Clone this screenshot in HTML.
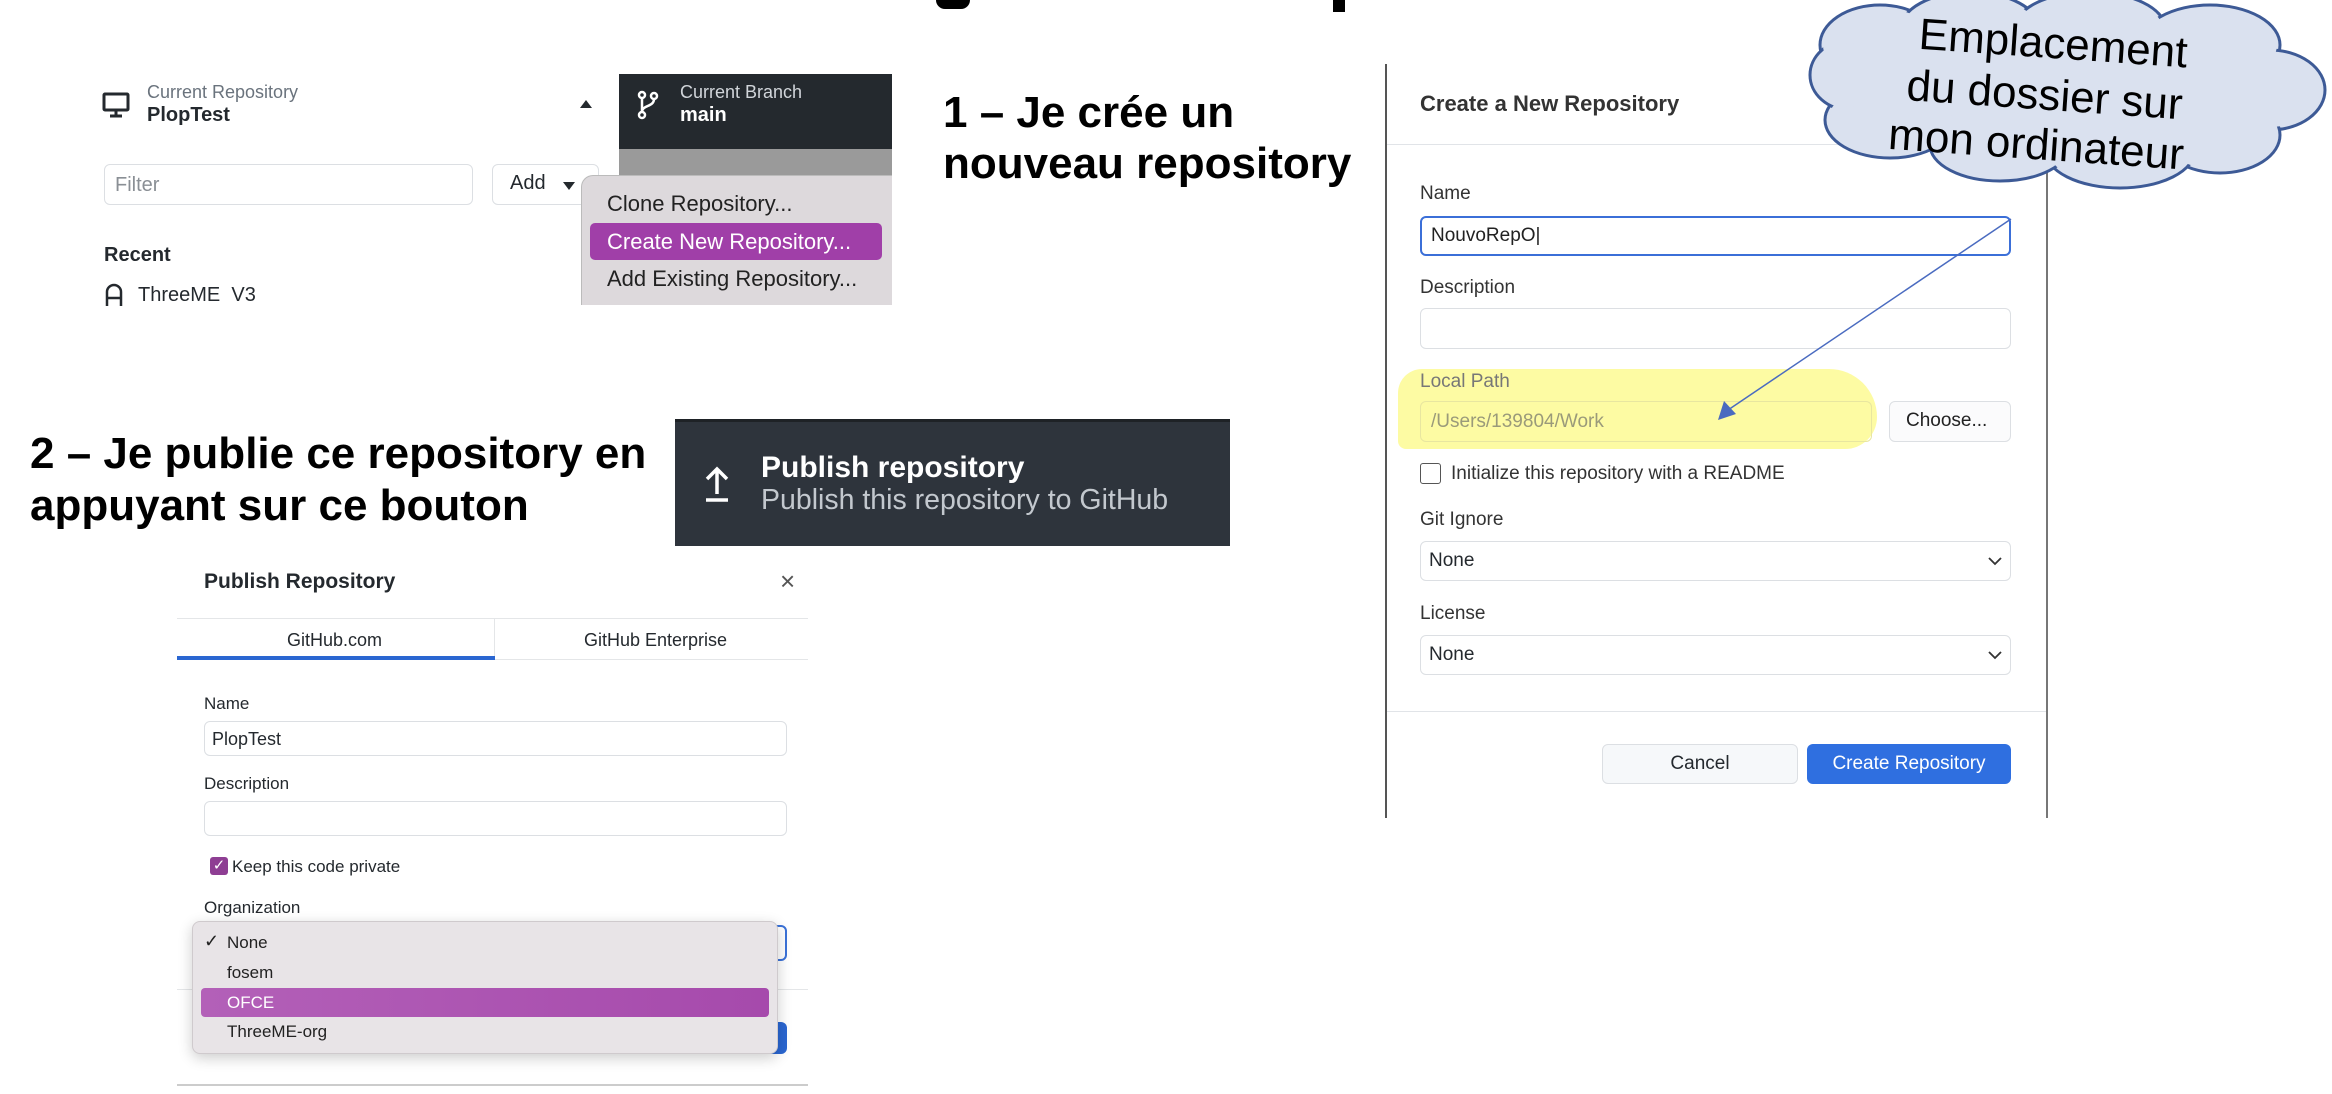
<!DOCTYPE html>
<html><head><meta charset="utf-8"><style>
*{margin:0;padding:0;box-sizing:border-box}
body{width:2332px;height:1094px;background:#fff;position:relative;overflow:hidden;font-family:"Liberation Sans",Arial,sans-serif;color:#24292e}
.a{position:absolute;white-space:nowrap}
.big{font-weight:bold;font-size:44px;color:#000;line-height:50px}
.inp{position:absolute;border:1px solid #dcdfe3;border-radius:6px;background:#fff}
.lbl{position:absolute;font-size:19px;color:#333;white-space:nowrap}
</style></head><body>

<div class="a" style="left:936px;top:0;width:34px;height:9px;background:#000;border-radius:0 0 14px 14px"></div>
<div class="a" style="left:1333px;top:0;width:12px;height:12px;background:#000"></div>
<div class="a" style="left:1937px;top:0;width:12px;height:8px;background:#000"></div>

<svg class="a" style="left:102px;top:92px" width="28" height="26" viewBox="0 0 28 26"><rect x="2" y="2" width="24" height="16" rx="1" fill="none" stroke="#24292e" stroke-width="3"/><path d="M14 18v5M8 24h12" stroke="#24292e" stroke-width="3"/></svg>
<div class="a" style="left:147px;top:82px;font-size:18px;color:#6a737d">Current Repository</div>
<div class="a" style="left:147px;top:104px;font-size:20px;font-weight:bold">PlopTest</div>
<div class="a" style="left:580px;top:100px;width:0;height:0;border-left:6px solid transparent;border-right:6px solid transparent;border-bottom:8px solid #24292e"></div>
<div class="a" style="left:619px;top:74px;width:273px;height:75px;background:#24292e"></div>
<div class="a" style="left:619px;top:149px;width:273px;height:156px;background:#9a9a9a"></div>
<svg class="a" style="left:637px;top:90px" width="22" height="30" viewBox="0 0 22 30"><g fill="none" stroke="#fff" stroke-width="2.5"><circle cx="5" cy="5" r="3"/><circle cx="17" cy="6" r="3"/><circle cx="5" cy="25" r="3"/><path d="M5 8v14M17 9c0 8-12 6-12 13"/></g></svg>
<div class="a" style="left:680px;top:82px;font-size:18px;color:#d1d5da">Current Branch</div>
<div class="a" style="left:680px;top:104px;font-size:20px;font-weight:bold;color:#fff">main</div>
<div class="inp" style="left:104px;top:164px;width:369px;height:41px"></div>
<div class="a" style="left:115px;top:174px;font-size:20px;color:#8a8f95">Filter</div>
<div class="inp" style="left:492px;top:164px;width:107px;height:41px"></div>
<div class="a" style="left:510px;top:172px;font-size:20px">Add</div>
<div class="a" style="left:563px;top:182px;width:0;height:0;border-left:6px solid transparent;border-right:6px solid transparent;border-top:8px solid #24292e"></div>
<div class="a" style="left:104px;top:244px;font-size:20px;font-weight:bold">Recent</div>
<svg class="a" style="left:104px;top:282px" width="20" height="24" viewBox="0 0 20 24"><path d="M3 24V10a7 7 0 0 1 14 0v14M3 16h14" fill="none" stroke="#24292e" stroke-width="2.5"/></svg>
<div class="a" style="left:138px;top:284px;font-size:20px">ThreeME&nbsp; V3</div>
<div class="a" style="left:581px;top:175px;width:311px;height:130px;background:#ddd9dc;border:1px solid #bbb;border-right:none;border-bottom:none;border-radius:12px 0 0 0"></div>
<div class="a" style="left:607px;top:191px;font-size:22px;color:#222">Clone Repository...</div>
<div class="a" style="left:590px;top:223px;width:292px;height:37px;background:#a03fa8;border-radius:5px"></div>
<div class="a" style="left:607px;top:229px;font-size:22px;color:#fff">Create New Repository...</div>
<div class="a" style="left:607px;top:266px;font-size:22px;color:#222">Add Existing Repository...</div>

<div class="a big" style="left:943px;top:88px">1 – Je crée un</div>
<div class="a big" style="left:943px;top:139px">nouveau repository</div>
<div class="a big" style="left:30px;top:429px">2 – Je publie ce repository en</div>
<div class="a big" style="left:30px;top:481px">appuyant sur ce bouton</div>

<div class="a" style="left:675px;top:419px;width:555px;height:127px;background:#2e343c;border-top:3px solid #1e2226"></div>
<svg class="a" style="left:702px;top:464px" width="30" height="40" viewBox="0 0 30 40"><path d="M15 30V5M5 15L15 5l10 10M4 36h22" fill="none" stroke="#fff" stroke-width="3.5"/></svg>
<div class="a" style="left:761px;top:451px;font-size:30px;font-weight:bold;color:#fff">Publish repository</div>
<div class="a" style="left:761px;top:484px;font-size:28.5px;color:#c3c8ce">Publish this repository to GitHub</div>

<div class="a" style="left:204px;top:570px;font-size:21px;font-weight:bold">Publish Repository</div>
<div class="a" style="left:780px;top:566px;font-size:26px;color:#555">×</div>
<div class="a" style="left:177px;top:618px;width:631px;height:1px;background:#e4e6e8"></div>
<div class="a" style="left:494px;top:618px;width:1px;height:42px;background:#e4e6e8"></div>
<div class="a" style="left:177px;top:659px;width:631px;height:1px;background:#e4e6e8"></div>
<div class="a" style="left:177px;top:656px;width:318px;height:4px;background:#2a66d1"></div>
<div class="a" style="left:287px;top:630px;font-size:18px">GitHub.com</div>
<div class="a" style="left:584px;top:630px;font-size:18px">GitHub Enterprise</div>
<div class="a" style="left:204px;top:694px;font-size:17px">Name</div>
<div class="inp" style="left:204px;top:721px;width:583px;height:35px"></div>
<div class="a" style="left:212px;top:729px;font-size:18px">PlopTest</div>
<div class="a" style="left:204px;top:774px;font-size:17px">Description</div>
<div class="inp" style="left:204px;top:801px;width:583px;height:35px"></div>
<div class="a" style="left:210px;top:857px;width:18px;height:18px;background:#8e3e93;border-radius:3px;color:#fff;font-size:15px;line-height:18px;text-align:center">✓</div>
<div class="a" style="left:232px;top:857px;font-size:17px">Keep this code private</div>
<div class="a" style="left:204px;top:898px;font-size:17px">Organization</div>
<div class="a" style="left:700px;top:925px;width:87px;height:36px;border:2px solid #3b72d8;border-radius:6px"></div>
<div class="a" style="left:177px;top:989px;width:631px;height:1px;background:#e4e6e8"></div>
<div class="a" style="left:620px;top:1022px;width:167px;height:32px;background:#2a66d1;border-radius:6px"></div>
<div class="a" style="left:177px;top:1084px;width:631px;height:2px;background:#ccc"></div>
<div class="a" style="left:192px;top:921px;width:586px;height:133px;background:#e8e4e7;border:1px solid #cfcacd;border-radius:8px;box-shadow:0 4px 14px rgba(0,0,0,.2)"></div>
<div class="a" style="left:204px;top:931px;font-size:18px;color:#222">✓</div>
<div class="a" style="left:227px;top:933px;font-size:17px;color:#222">None</div>
<div class="a" style="left:227px;top:963px;font-size:17px;color:#222">fosem</div>
<div class="a" style="left:201px;top:988px;width:568px;height:29px;background:linear-gradient(90deg,#b360b8,#a64aac);border-radius:4px"></div>
<div class="a" style="left:227px;top:993px;font-size:17px;color:#fff">OFCE</div>
<div class="a" style="left:227px;top:1022px;font-size:17px;color:#222">ThreeME-org</div>

<div class="a" style="left:1385px;top:64px;width:663px;height:754px;border-left:2px solid #555;border-right:2px solid #777"></div>
<div class="a" style="left:1420px;top:91px;font-size:22px;font-weight:bold;color:#333">Create a New Repository</div>
<div class="a" style="left:1387px;top:144px;width:659px;height:1px;background:#e1e4e8"></div>
<div class="lbl" style="left:1420px;top:183px">Name</div>
<div class="a" style="left:1420px;top:216px;width:591px;height:40px;border:2px solid #3b6fd8;border-radius:6px"></div>
<div class="a" style="left:1431px;top:225px;font-size:19px;color:#222">NouvoRepO|</div>
<div class="lbl" style="left:1420px;top:277px">Description</div>
<div class="inp" style="left:1420px;top:308px;width:591px;height:41px"></div>
<div class="a" style="left:1398px;top:369px;width:479px;height:80px;background:#fdfb9e;border-radius:30px 60px 40px 10px;opacity:.95"></div>
<div class="lbl" style="left:1420px;top:371px;color:#777">Local Path</div>
<div class="a" style="left:1420px;top:401px;width:452px;height:41px;border:1px solid #e8e6a0;border-radius:6px"></div>
<div class="a" style="left:1431px;top:411px;font-size:19px;color:#9a9a7a">/Users/139804/Work</div>
<div class="inp" style="left:1889px;top:401px;width:122px;height:41px;background:#fbfbfc"></div>
<div class="a" style="left:1906px;top:410px;font-size:19px;color:#222">Choose...</div>
<div class="a" style="left:1420px;top:463px;width:21px;height:21px;border:1.5px solid #555;border-radius:3px"></div>
<div class="lbl" style="left:1451px;top:463px">Initialize this repository with a README</div>
<div class="lbl" style="left:1420px;top:509px">Git Ignore</div>
<div class="inp" style="left:1420px;top:541px;width:591px;height:40px"></div>
<div class="a" style="left:1429px;top:550px;font-size:19px">None</div>
<svg class="a" style="left:1988px;top:556px" width="14" height="10"><path d="M1 2l6 6 6-6" fill="none" stroke="#333" stroke-width="1.8"/></svg>
<div class="lbl" style="left:1420px;top:603px">License</div>
<div class="inp" style="left:1420px;top:635px;width:591px;height:40px"></div>
<div class="a" style="left:1429px;top:644px;font-size:19px">None</div>
<svg class="a" style="left:1988px;top:650px" width="14" height="10"><path d="M1 2l6 6 6-6" fill="none" stroke="#333" stroke-width="1.8"/></svg>
<div class="a" style="left:1387px;top:711px;width:659px;height:1px;background:#e1e4e8"></div>
<div class="inp" style="left:1602px;top:744px;width:196px;height:40px;background:#f6f8fa"></div>
<div class="a" style="left:1602px;top:753px;width:196px;text-align:center;font-size:19px">Cancel</div>
<div class="a" style="left:1807px;top:744px;width:204px;height:40px;background:#2f6fe0;border-radius:6px;color:#fff;font-size:19px;text-align:center;line-height:40px">Create Repository</div>

<svg class="a" style="left:0;top:0" width="2332" height="1094"><line x1="2011" y1="219" x2="1728" y2="410" stroke="#4a6bc0" stroke-width="1.5"/><polygon points="1718,420 1724,401 1736,414" fill="#4a6bc0"/></svg>

<svg class="a" style="left:1800px;top:0" width="532" height="195" viewBox="0 0 532 195">
<g fill="#dae1ef" stroke="#3d5a96" stroke-width="3">
<ellipse cx="80" cy="45" rx="60" ry="40"/><ellipse cx="170" cy="30" rx="70" ry="38"/><ellipse cx="290" cy="28" rx="75" ry="36"/><ellipse cx="410" cy="45" rx="70" ry="40"/><ellipse cx="470" cy="90" rx="55" ry="40"/><ellipse cx="420" cy="135" rx="60" ry="38"/><ellipse cx="320" cy="150" rx="75" ry="38"/><ellipse cx="200" cy="145" rx="70" ry="36"/><ellipse cx="90" cy="120" rx="65" ry="38"/><ellipse cx="50" cy="75" rx="40" ry="35"/>
</g>
<g fill="#dae1ef"><ellipse cx="260" cy="90" rx="230" ry="72"/><ellipse cx="80" cy="45" rx="57" ry="37"/><ellipse cx="170" cy="30" rx="67" ry="35"/><ellipse cx="290" cy="28" rx="72" ry="33"/><ellipse cx="410" cy="45" rx="67" ry="37"/><ellipse cx="470" cy="90" rx="52" ry="37"/><ellipse cx="420" cy="135" rx="57" ry="35"/><ellipse cx="320" cy="150" rx="72" ry="35"/><ellipse cx="200" cy="145" rx="67" ry="33"/><ellipse cx="90" cy="120" rx="62" ry="35"/><ellipse cx="50" cy="75" rx="37" ry="32"/></g>
<g transform="rotate(4 250 90)" font-family="Liberation Sans, sans-serif" font-size="44" fill="#000" text-anchor="middle"><text x="250" y="58">Emplacement</text><text x="245" y="110">du dossier sur</text><text x="240" y="160">mon ordinateur</text></g>
</svg>
</body></html>
